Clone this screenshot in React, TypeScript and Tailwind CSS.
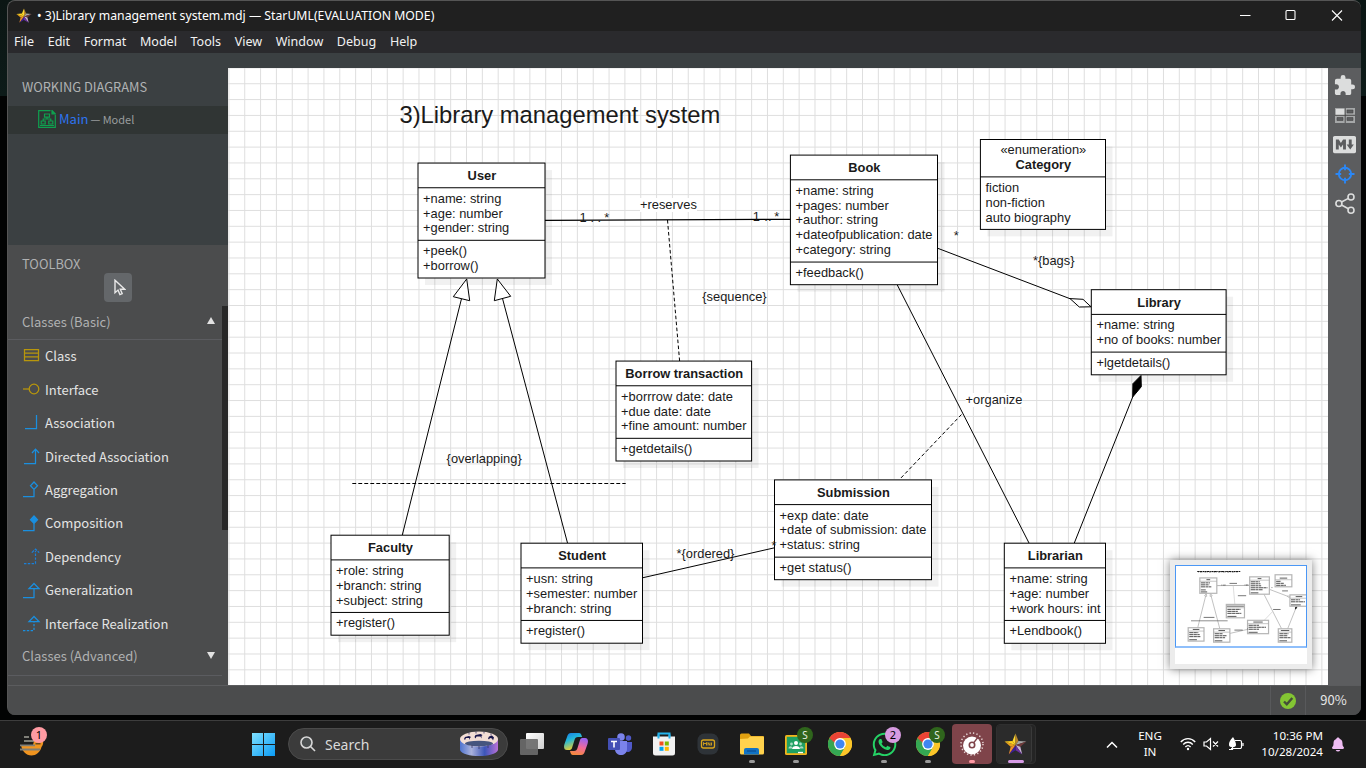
import React from "react";
import { FaWhatsapp } from "react-icons/fa";
import { MdExtension } from "react-icons/md";
import { IoLogoMarkdown, IoNotifications } from "react-icons/io5";

type UmlClass = {
  name: string;
  stereotype?: string;
  x: number;
  y: number;
  right: number;
  bottom: number;
  attrs: string[];
  ops: string[];
};

const classes: UmlClass[] = [
  { name: "User", x: 418, y: 163.06, right: 545, bottom: 278, attrs: ["+name: string", "+age: number", "+gender: string"], ops: ["+peek()", "+borrow()"] },
  { name: "Book", x: 790.4, y: 155.1, right: 937.5, bottom: 284.7, attrs: ["+name: string", "+pages: number", "+author: string", "+dateofpublication: date", "+category: string"], ops: ["+feedback()"] },
  { name: "Category", stereotype: "«enumeration»", x: 980.4, y: 139.5, right: 1105.5, bottom: 229.4, attrs: ["fiction", "non-fiction", "auto biography"], ops: [] },
  { name: "Library", x: 1091.3, y: 289.7, right: 1226.1, bottom: 374.8, attrs: ["+name: string", "+no of books: number"], ops: ["+lgetdetails()"] },
  { name: "Borrow transaction", x: 616, y: 361.07, right: 751.6, bottom: 461, attrs: ["+borrrow date: date", "+due date: date", "+fine amount: number"], ops: ["+getdetails()"] },
  { name: "Submission", x: 774.5, y: 479.9, right: 931.5, bottom: 579.7, attrs: ["+exp date: date", "+date of submission: date", "+status: string"], ops: ["+get status()"] },
  { name: "Faculty", x: 331, y: 535.2, right: 449.2, bottom: 635.2, attrs: ["+role: string", "+branch: string", "+subject: string"], ops: ["+register()"] },
  { name: "Student", x: 521, y: 543.2, right: 642.5, bottom: 643.2, attrs: ["+usn: string", "+semester: number", "+branch: string"], ops: ["+register()"] },
  { name: "Librarian", x: 1004.3, y: 543.2, right: 1105.5, bottom: 643.3, attrs: ["+name: string", "+age: number", "+work hours: int"], ops: ["+Lendbook()"] },
];

const labels: { text: string; x: number; y: number; backed?: boolean }[] = [
  { text: "+reserves", x: 640, y: 209, backed: true },
  { text: "1", x: 579.4, y: 221.5 },
  { text: ".", x: 590.5, y: 222 },
  { text: ".", x: 597.5, y: 222 },
  { text: "*", x: 604.3, y: 221.5 },
  { text: "1", x: 752.8, y: 220.5 },
  { text: ".", x: 764.3, y: 221 },
  { text: ".", x: 768, y: 221 },
  { text: "*", x: 774.2, y: 220.5 },
  { text: "{sequence}", x: 702.3, y: 301 },
  { text: "*", x: 953.8, y: 240 },
  { text: "*{bags}", x: 1033, y: 265 },
  { text: "+organize", x: 965.6, y: 404, backed: true },
  { text: "{overlapping}", x: 446.6, y: 463 },
  { text: "*{ordered}", x: 676.5, y: 558 },
  { text: "*", x: 771.5, y: 549.5 },
];

const ROW = 14.85;

function Edges({ mini = false }: { mini?: boolean }) {
  const stroke = mini ? "#a3a3a3" : "#000";
  const w = mini ? 5 : 1;
  return (
    <g stroke={stroke} strokeWidth={w} fill="none">
      <path d="M545 220.4L790.4 219.3" strokeWidth={mini ? 6 : 1.3} />
      <path d="M667.5 220L679.6 361" strokeDasharray={mini ? undefined : "3.6 2.4"} stroke={mini ? "#ccc" : stroke} />
      <path d="M461.5 298.7L402.3 535" />
      <path d="M466.7 279L453.3 296.7L469.7 300.7Z" fill="#fff" />
      <path d="M502.5 298.5L567.5 543" />
      <path d="M497.3 279L494.3 300.7L510.7 296.3Z" fill="#fff" />
      <path d="M352.3 483.5H625.7" strokeDasharray={mini ? undefined : "3.9 2.1"} stroke={mini ? "#555" : stroke} />
      <path d="M642.5 577.8L774.5 547.8" />
      <path d="M897.3 285L1029 543" />
      <path d="M961.5 414.5L899.5 479.5" strokeDasharray={mini ? undefined : "3.6 2.4"} stroke={mini ? "#ccc" : stroke} />
      <path d="M937.5 248.2L1070 298.7" />
      <path d="M1070 298.6L1083 299.3L1091 306.8L1079.3 307Z" fill="#fff" />
      <path d="M1132.7 397L1074.3 543" />
      <path d="M1141 375.5L1141.3 386.7L1132.7 397L1132.9 383.7Z" fill="#000" stroke="#000" />
    </g>
  );
}

function UmlNode({ c }: { c: UmlClass }) {
  const w = c.right - c.x;
  const head = c.stereotype ? 37.4 : 24.7;
  const d1 = c.y + head;
  const d2 = d1 + c.attrs.length * ROW + 8;
  const mid = c.x + w / 2 + 0.4;
  return (
    <g>
      <rect x={c.x + 7} y={c.y + 7} width={w} height={c.bottom - c.y} fill="#000" fillOpacity={0.055} />
      <rect x={c.x} y={c.y} width={w} height={c.bottom - c.y} fill="#fff" stroke="#000" />
      <path d={`M${c.x} ${d1}H${c.right}`} stroke="#000" />
      {c.ops.length > 0 && <path d={`M${c.x} ${d2}H${c.right}`} stroke="#000" />}
      {c.stereotype && (
        <text x={mid} y={Math.round(c.y + 14.4)} textAnchor="middle">{c.stereotype}</text>
      )}
      <text x={mid} y={Math.round(d1 - 7.6)} textAnchor="middle" fontWeight="bold">{c.name}</text>
      {c.attrs.map((t, i) => (
        <text key={t} x={c.x + 5.1} y={Math.round(d1 + 14.95 + i * ROW)}>{t}</text>
      ))}
      {c.ops.map((t, i) => (
        <text key={t} x={c.x + 5.1} y={Math.round(d2 + 15 + i * ROW)}>{t}</text>
      ))}
    </g>
  );
}

function Diagram() {
  return (
    <svg className="block h-[617px] w-[1100px] shrink-0 [font-family:'Liberation_Sans',Arial,sans-serif]" viewBox="228 68 1100 617" fontSize={12.87} fill="#1a1a1a">
      <defs>
        <pattern id="grid" x="228.4" y="67.4" width="15.84" height="15.84" patternUnits="userSpaceOnUse">
          <path d="M0.5 0V15.84M0 0.5H15.84" stroke="#dedede" fill="none" />
        </pattern>
      </defs>
      <rect x="228" y="68" width="1100" height="617" fill="#fff" />
      <rect x="228" y="68" width="1100" height="617" fill="url(#grid)" />
      <text x="399.5" y="123" fontSize={23.76}>3)Library management system</text>
      {classes.map((c) => <UmlNode key={c.name} c={c} />)}
      {labels.filter((l) => l.backed).map((l) => (
        <rect key={l.text} x={l.x} y={l.y - 11} width={57} height={14} fill="#fff" />
      ))}
      <Edges />
      {labels.map((l, i) => <text key={i} x={l.x} y={l.y}>{l.text}</text>)}
    </svg>
  );
}

function Minimap() {
  return (
    <div className="absolute right-4 bottom-4 h-[109px] w-[142px] bg-[#ececec] p-[5px] shadow-[0_0_9px_rgba(0,0,0,0.5)]">
      <div className="h-[99px] bg-white">
        <div className="h-[82.5px] border border-b-2 border-[#4b97f5] border-b-[#8fbffb]">
          <svg className="block h-full w-full" viewBox="240 74 975 594" preserveAspectRatio="xMinYMin slice">
            <Edges mini />
            <path d="M399 115H720" stroke="#111" strokeWidth={8} strokeDasharray="13 3 22 4 9 3" />
            <path d="M405 121H700" stroke="#777" strokeWidth={5} strokeDasharray="5 9 14 6" />
            {classes.map((c) => {
              const d1 = c.y + (c.stereotype ? 37 : 25);
              return (
                <g key={c.name} stroke="#8c8c8c" strokeWidth={6}>
                  <rect x={c.x} y={c.y} width={c.right - c.x} height={c.bottom - c.y} fill="#fff" stroke="#b5b5b5" strokeWidth={9} />
                  <path d={`M${c.x} ${d1}H${c.right}`} strokeWidth={5} stroke="#aaa" />
                  <path d={`M${(c.x + c.right) / 2 - c.name.length * 3.5} ${d1 - 12}h${c.name.length * 7}`} stroke="#333" />
                  {c.attrs.map((t, i) => (
                    <path key={t} d={`M${c.x + 8} ${d1 + 12 + i * ROW}h${t.length * 5.2}`} stroke="#222" strokeDasharray="32 3 22 3" />
                  ))}
                  {c.ops.map((t, i) => (
                    <path key={t} d={`M${c.x + 8} ${d1 + 20 + (c.attrs.length + i) * ROW}h${t.length * 5.2}`} stroke="#333" />
                  ))}
                </g>
              );
            })}
            {labels.map((l, i) => (
              <path key={i} d={`M${l.x} ${l.y - 5}h${l.text.length * 6.2}`} stroke="#333" strokeWidth={5} />
            ))}
          </svg>
        </div>
      </div>
    </div>
  );
}

function Star({ className }: { className: string }) {
  const colors = [
    ["#ffd92e", "#b8862c"],
    ["#a9a9a9", "#6f3a3a"],
    ["#c9b3d6", "#6a2fa0"],
    ["#3b1f96", "#f0902a"],
    ["#e8a01c", "#ffd21f"],
  ];
  const pt = (r: number, deg: number) => {
    const a = ((deg - 90) * Math.PI) / 180;
    return `${(r * Math.cos(a)).toFixed(2)},${(r * Math.sin(a)).toFixed(2)}`;
  };
  return (
    <svg viewBox="-10 -10 20 19" className={className}>
      {colors.map(([l, r], i) => (
        <g key={i}>
          <polygon points={`0,0 ${pt(10, i * 72)} ${pt(4.4, i * 72 - 36)}`} fill={l} />
          <polygon points={`0,0 ${pt(10, i * 72)} ${pt(4.4, i * 72 + 36)}`} fill={r} />
        </g>
      ))}
    </svg>
  );
}

const tools: { name: string; color: string; icon: React.ReactNode }[] = [
  { name: "Class", color: "#b8960c", icon: <path d="M1.5 2.5h14v11h-14zM1.5 6.2h14M1.5 9.8h14" /> },
  { name: "Interface", color: "#b8960c", icon: <><path d="M0 8h6" /><circle cx="11" cy="8" r="4.8" /></> },
  { name: "Association", color: "#1a8fe0", icon: <path d="M2 14.5h11.5V1" /> },
  { name: "Directed Association", color: "#1a8fe0", icon: <path d="M1 15.5h11.5V1.5M9 5l3.5-3.8L16 5" /> },
  { name: "Aggregation", color: "#1a8fe0", icon: <path d="M0 15.5h11V8.5M11 1l3.5 3.7L11 8.4 7.5 4.7z" /> },
  { name: "Composition", color: "#1a8fe0", icon: <><path d="M0 15.5h11V8.5" /><path d="M11 1l3.5 3.7L11 8.4 7.5 4.7z" fill="#1a8fe0" /></> },
  { name: "Dependency", color: "#1a7fd8", icon: <><path d="M1 15.5h11.5V3" strokeDasharray="2.4 1.4" /><path d="M8.8 4.6l3.7-3.4 3.7 3.4" strokeDasharray="3 1" /></> },
  { name: "Generalization", color: "#1a8fe0", icon: <path d="M0 15.5h11V6.5M11 1.5l5 5H6z" /> },
  { name: "Interface Realization", color: "#1a8fe0", icon: <><path d="M0 15.5h11V6.5" strokeDasharray="2.4 1.4" /><path d="M11 1.5l5 5H6z" /></> },
];

function Sidebar() {
  return (
    <aside className="flex w-[220px] shrink-0 flex-col text-[13px] [font-family:'Noto_Sans_CJK_SC',sans-serif]">
      <div className="flex h-[177px] flex-col bg-[#3b4042]">
        <div className="h-[38px] pt-[9px] pl-[14px] text-[12.85px] leading-5 text-[#b0b3b4]">WORKING DIAGRAMS</div>
        <div className="flex h-7 items-center bg-[#303534] pb-[2px] pl-[30px]">
          <svg viewBox="0 0 18 18" className="h-[18px] w-[18px]" fill="none" stroke="#0fa04f" strokeWidth="1.2">
            <path d="M12.5 .7H.7v16.6h16.6V5" />
            <path d="M14 .5v3.3h3.3z" fill="#0fa04f" />
            <path d="M6.5 4h5v3.2h-5zM3.2 11h4v3h-4zM10.8 11h4v3h-4zM9 7v2M5.2 11V9h7.6v2M2 15.5h14" />
          </svg>
          <span className="ml-[3px] text-[13px] text-[#2d74f0]">Main</span>
          <span className="ml-[2px] text-[11px] text-[#9a9d9e]">— Model</span>
        </div>
      </div>
      <div className="flex min-h-0 flex-1 flex-col bg-[#4b4c4d]">
        <div className="h-7 pt-[9px] pl-[14px] text-[12.85px] leading-5 text-[#b0b1b2]">TOOLBOX</div>
        <div className="flex justify-center">
          <div className="flex h-[29px] w-7 items-center justify-center rounded bg-[#64676a]">
            <svg viewBox="0 0 12 17" className="ml-[3px] h-[17px] w-3" fill="none" stroke="#e8e8e8" strokeWidth="1.4">
              <path d="M1 1.2v12.6l3-2.7 1.9 4.5 2.3-1-1.9-4.4h4.4z" />
            </svg>
          </div>
        </div>
        <div className="flex min-h-0 flex-1">
          <div className="mt-[4px] flex-1">
            <div className="flex h-[34px] items-center justify-between border-b border-[#5b5c60] pr-[7px] pb-[2px] pl-[14px] text-[#b0b1b2]">
              <span>Classes (Basic)</span>
              <svg viewBox="0 0 8 7" className="mb-[2px] h-[7px] w-2"><path d="M4 0l4 7H0z" fill="#e2e2e2" /></svg>
            </div>
            {tools.map((t) => (
              <div key={t.name} className="flex h-[33.46px] items-center pb-[1.5px] pl-[15px] text-[#e4e4e4]">
                <svg viewBox="0 0 17 17" className="h-[17px] w-[17px] overflow-visible" fill="none" stroke={t.color} strokeWidth="1.25">{t.icon}</svg>
                <span className="ml-[5px]">{t.name}</span>
              </div>
            ))}
            <div className="flex h-[35px] items-center justify-between border-b border-[#5b5c60] pr-[7px] pb-[4px] pl-[14px] text-[#b0b1b2]">
              <span>Classes (Advanced)</span>
              <svg viewBox="0 0 8 7" className="mb-[2px] h-[7px] w-2"><path d="M4 7l4-7H0z" fill="#e2e2e2" /></svg>
            </div>
          </div>
          <div className="mt-[4px] h-[224px] w-[6px] bg-[#272727]" />
        </div>
      </div>
    </aside>
  );
}

function RightBar() {
  return (
    <aside className="flex w-[33px] shrink-0 flex-col items-center bg-[#5c5d5f] pt-[3px]">
      <div className="flex h-[29.5px] items-center"><MdExtension className="h-[23px] w-[23px] text-[#dcdddd]" /></div>
      <div className="flex h-[29.5px] items-center">
        <svg viewBox="0 0 20 15" className="h-[15px] w-5">
          <path d="M0 0h20v15H0z" fill="#a5a7a8" />
          <path d="M1 1h8.5v6H1z" fill="#dcdddd" />
          <path d="M12 2h6v3h-6zM2 9.5h6v3H2zM12 9.5h6v3h-6z" fill="#5c5d5f" stroke="#444" strokeWidth=".6" />
          <path d="M0 7.3h20M10.2 0v15" stroke="#444" strokeWidth=".9" />
        </svg>
      </div>
      <div className="flex h-[29.5px] items-center">
        <IoLogoMarkdown className="h-[23px] w-[23px] text-[#dcdddd]" />
      </div>
      <div className="flex h-[29.5px] items-center">
        <svg viewBox="0 0 20 20" className="h-5 w-5" fill="none" stroke="#2b87f5" strokeWidth="1.9">
          <circle cx="10" cy="10" r="6.2" />
          <path d="M10 .5v5.7M10 13.8v5.7M.5 10h5.7M13.8 10h5.7" />
        </svg>
      </div>
      <div className="flex h-[28px] items-center">
        <svg viewBox="0 0 20 21" className="h-[21px] w-5" fill="none" stroke="#dcdddd" strokeWidth="1.6">
          <circle cx="3.9" cy="10.5" r="3" /><circle cx="16" cy="4" r="3" /><circle cx="16" cy="17.2" r="3" />
          <path d="M6.5 9l6.9-3.6M6.5 12l6.9 3.8" />
        </svg>
      </div>
    </aside>
  );
}

function Chrome() {
  return (
    <svg viewBox="0 0 24 24" className="h-6 w-6">
      <circle cx="12" cy="12" r="12" fill="#fcc629" />
      <path d="M1.6 6A12 12 0 0 0 12 24L17.2 15z" fill="#34a853" />
      <path d="M1.6 6L7 15 12 12z" fill="#34a853" />
      <path d="M22.4 6H12v6l5.2 3L12 24A12 12 0 0 0 22.4 6z" fill="#fcc629" />
      <path d="M1.6 6A12 12 0 0 1 22.4 6H12L7 9z" fill="#ea4335" />
      <path d="M1.6 6L7 15V9L12 6z" fill="#ea4335" />
      <path d="M1.6 6L6.8 15l1-3z" fill="#34a853" />
      <circle cx="12" cy="12" r="5.9" fill="#fff" />
      <circle cx="12" cy="12" r="4.6" fill="#3f86f2" />
    </svg>
  );
}

function Cell({ children, badge, mark }: { children: React.ReactNode; badge?: React.ReactNode; mark?: string }) {
  return (
    <div className="relative flex h-full w-[44px] shrink-0 items-center justify-center pb-px">
      {children}
      {badge}
      {mark && <div className={mark} />}
    </div>
  );
}

const RUNNING = "absolute bottom-[5px] left-[19px] h-[3px] w-[6px] rounded-full bg-[#9a9a9a]";
const sBadge = (
  <div className="absolute top-[6px] right-[5px] flex h-4 w-4 items-center justify-center rounded-full bg-[#2f651c] text-[10px] text-[#e6efe2]">S</div>
);

function Taskbar() {
  return (
    <footer className="flex h-12 items-center border-t border-[#3d3d3d] bg-[#1c1c1c] text-white [font-family:'Noto_Sans',sans-serif]">
      <div className="relative ml-5 h-[31px] w-[30px]">
        <svg viewBox="0 0 24 20" className="absolute top-[7px] left-0 h-5 w-6">
          <path d="M1 9h12l1-4h9c.5 2 0 4-1.500 6C20 16.500 16 19.500 11.500 19.500 6 19.500 2 15 1 9z" fill="#f0941f" />
          <path d="M15.500 7h5v1.500h-5z" fill="#6b4a18" />
          <path d="M4 1h5M4 5h10M0 9.300h15M0 13.500h20" stroke="#7f7f78" strokeWidth="1.800" />
        </svg>
        <div className="absolute top-[-2px] left-[11px] flex h-4 w-4 items-center justify-center rounded-full bg-[#ff9aa2] text-[11px] text-black">1</div>
      </div>
      <svg viewBox="0 0 23 23" className="ml-[202px] h-[23px] w-[23px]">
        <defs>
          <linearGradient id="win" x1="0" y1="0" x2="1" y2="1"><stop offset="0" stopColor="#7fe0ff" /><stop offset="1" stopColor="#0a9bf5" /></linearGradient>
        </defs>
        <path d="M0 0h11v11H0zM12 0h11v11H12zM0 12h11v11H0zM12 12h11v11H12z" fill="url(#win)" />
      </svg>
      <div className="mb-px ml-[13px] flex h-8 w-[220px] items-center rounded-full border border-[#4b4b4b] bg-[#3b3b3b] pr-[9px] pl-[11px]">
        <svg viewBox="0 0 16 16" className="h-4 w-4" fill="none" stroke="#d8d8d8" strokeWidth="1.6">
          <circle cx="6.500" cy="6.500" r="5.500" fill="#4b4f50" /><path d="M10.500 10.500l4.500 4.500" />
        </svg>
        <span className="ml-[9px] flex-1 text-[14px] text-[#dadada]">Search</span>
        <svg viewBox="0 0 38 26" className="h-[26px] w-[38px]">
          <defs>
            <linearGradient id="ring" x1="0" x2="1"><stop offset="0" stopColor="#4f74d0" /><stop offset=".3" stopColor="#aab2dc" /><stop offset=".65" stopColor="#3c55b8" /><stop offset="1" stopColor="#b870d8" /></linearGradient>
          </defs>
          <path d="M0 8v11c3 8 35 8 38 0V8z" fill="url(#ring)" />
          <ellipse cx="19" cy="8" rx="19" ry="7.500" fill="#f2ddd4" />
          <ellipse cx="19" cy="12.500" rx="14" ry="2.800" fill="#46557e" />
          <path d="M4 8l1-2 4-1 2 1-1 1v2l-1-2-3 0-1 2zM14.500 6l1-2 5-1 2 1-1 1v2.500l-1-2-4 0-1 2zM28 7.500l1-2 3-1 2 2-1 3-1-2-2-.500-1 1.500z" fill="#17154a" />
          <path d="M9 1.500v2M16 .500v2M24 .500v2M31 2.500v2M12 14v3M19 15v3M28 14v3" stroke="#373766" strokeWidth=".8" />
        </svg>
      </div>
      <div className="ml-[2px] flex h-full">
        <Cell>
          <svg viewBox="0 0 24 22" className="h-[22px] w-6">
            <defs><linearGradient id="tv" x1="0" y1="0" x2="1" y2="1"><stop offset="0" stopColor="#fff" /><stop offset="1" stopColor="#cfcfcf" /></linearGradient></defs>
            <rect x="6" y="0" width="18" height="16" rx="1" fill="url(#tv)" />
            <rect x="0" y="6" width="18" height="16" rx="1" fill="#6b6b6b" fillOpacity=".92" />
          </svg>
        </Cell>
        <Cell>
          <svg viewBox="0 0 24 22" className="h-[22px] w-6">
            <defs>
              <linearGradient id="cpa" x1="0" y1="0" x2=".4" y2="1"><stop offset="0" stopColor="#1778e8" /><stop offset=".45" stopColor="#22b8d8" /><stop offset="1" stopColor="#f3d02a" /></linearGradient>
              <linearGradient id="cpb" x1=".6" y1="0" x2=".3" y2="1"><stop offset="0" stopColor="#9a64f0" /><stop offset=".5" stopColor="#f06a9a" /><stop offset="1" stopColor="#f58a3a" /></linearGradient>
            </defs>
            <path d="M7 0h8c2 0 2.500 2 3 4h-4c-2 0-3 1-3.500 3L8 15c-.500 1.500-1.500 2-3 2H3c-3 0-3.500-3-2.500-6L3 4c.800-2.500 1.800-4 4-4z" fill="url(#cpa)" />
            <path d="M17 22H9c-2 0-2.500-2-3-4h4c2 0 3-1 3.500-3L16 7c.500-1.500 1.500-2 3-2h2c3 0 3.500 3 2.500 6L21 18c-.800 2.500-1.800 4-4 4z" fill="url(#cpb)" />
          </svg>
        </Cell>
        <Cell>
          <svg viewBox="0 0 24 22" className="h-[22px] w-6">
            <circle cx="13" cy="4" r="3.800" fill="#7b83eb" /><circle cx="20.500" cy="5" r="2.700" fill="#5059c9" />
            <path d="M16 9h8v5c0 6-6 6-8 3z" fill="#5059c9" /><path d="M7 8h12v8c0 8-12 8-12 0z" fill="#7b83eb" />
            <rect x="0" y="5" width="12" height="12" rx="1" fill="#4450b5" />
            <path d="M3 8.500h6M6 8.500v6" stroke="#fff" strokeWidth="1.600" />
          </svg>
        </Cell>
        <Cell>
          <svg viewBox="0 0 24 24" className="h-6 w-6">
            <path d="M6.500 7V1.500h11V7" fill="none" stroke="#24b3ec" strokeWidth="2" />
            <path d="M1 4.500h22V21a2.500 2.500 0 0 1-2.500 2.500h-17A2.500 2.500 0 0 1 1 21z" fill="#f1f1f1" />
            <path d="M6.500 6.500V2.500M17.500 6.500V2.500" stroke="#24b3ec" strokeWidth="2" />
            <path d="M7.500 9.500h4v4h-4z" fill="#f25022" /><path d="M12.800 9.500h4v4h-4z" fill="#7fba00" />
            <path d="M7.500 14.800h4v4h-4z" fill="#00a4ef" /><path d="M12.800 14.800h4v4h-4z" fill="#ffb900" />
          </svg>
        </Cell>
        <Cell>
          <svg viewBox="0 0 22 22" className="h-[22px] w-[22px]">
            <rect x=".500" y=".500" width="21" height="21" rx="7" fill="#2e3338" />
            <rect x="4.500" y="7" width="13" height="8" rx="2" fill="none" stroke="#d9a51c" strokeWidth="1.300" />
            <path d="M6.500 12.500v-3l1.500 1.500 1.500-1.500v3M11 12.500v-3l2 3v-3M14.500 9.500v3" stroke="#d9a51c" fill="none" strokeWidth=".9" />
          </svg>
        </Cell>
        <Cell mark={RUNNING}>
          <svg viewBox="0 0 24 22" className="h-[22px] w-6">
            <path d="M0 2a1.500 1.500 0 0 1 1.500-1.500H9L11 3h12a1 1 0 0 1 1 1v8H0z" fill="#e0a010" />
            <path d="M0 6l8-.500 2-2h13a1 1 0 0 1 1 1V20a1.500 1.500 0 0 1-1.500 1.500h-21A1.500 1.500 0 0 1 0 20z" fill="#ffd24d" />
            <path d="M4 21.500V17a2 2 0 0 1 2-2h11a2 2 0 0 1 2 2v4.500z" fill="#1173c5" /><path d="M7 18h9" stroke="#0b4f93" strokeWidth="1.300" />
          </svg>
        </Cell>
        <Cell mark={RUNNING} badge={sBadge}>
          <svg viewBox="0 0 22 20" className="mt-[2px] h-5 w-[22px]">
            <rect x="0" y="0" width="22" height="20" rx="1.500" fill="#f2b51c" /><rect x="1.800" y="1.800" width="18.400" height="16.400" fill="#1fa163" />
            <circle cx="11" cy="8" r="2" fill="#fff" /><circle cx="6.500" cy="9" r="1.400" fill="#a6dbbf" /><circle cx="15.500" cy="9" r="1.400" fill="#a6dbbf" />
            <path d="M7 14c0-4 8-4 8 0z" fill="#fff" /><path d="M3.500 13.500c0-3 4-3 4 0zM14.500 13.500c0-3 4-3 4 0z" fill="#a6dbbf" /><path d="M13 17.500h5" stroke="#fff" strokeWidth="1.300" />
          </svg>
        </Cell>
        <Cell><Chrome /></Cell>
        <Cell mark={RUNNING} badge={<div className="absolute top-[6px] right-[5px] flex h-4 w-4 items-center justify-center rounded-full bg-[#d79be0] text-[11px] text-black">2</div>}>
          <FaWhatsapp className="h-[27px] w-[27px] text-[#25d366]" />
        </Cell>
        <Cell mark={RUNNING} badge={sBadge}><Chrome /></Cell>
        <Cell mark="absolute bottom-[5px] left-[19px] h-[3px] w-[6px] rounded-full bg-[#ff99a4]">
          <div className="flex h-10 w-10 items-center justify-center rounded bg-[#7f444a]">
            <svg viewBox="0 0 26 24" className="h-6 w-[26px]">
              <circle cx="13" cy="12" r="11" fill="none" stroke="#e8d8d8" strokeWidth="1.500" strokeDasharray="1.300 2.200" />
              <circle cx="13" cy="13.500" r="9" fill="#fff" /><circle cx="13" cy="13" r="3.500" fill="#7f444a" />
              <path d="M13 13l6.500-8.500" stroke="#7f444a" strokeWidth="1.300" /><circle cx="13" cy="13" r="1.900" fill="#fff" />
            </svg>
          </div>
        </Cell>
        <Cell mark="absolute bottom-[5px] left-[14px] h-[3px] w-4 rounded-full bg-[#d79be6]">
          <div className="flex h-10 w-10 rounded border border-[#2f2f2f] bg-[#242424]">
            <div className="flex w-[35px] items-center justify-center rounded border-r border-[#3a3a3a] bg-[#2b2b2b] pl-[3px]"><Star className="h-[23px] w-[23px]" /></div>
          </div>
        </Cell>
      </div>
      <svg viewBox="0 0 12 8" className="ml-[68px] h-2 w-3" fill="none" stroke="#fff" strokeWidth="1.500"><path d="M1 6.500L6 1.500l5 5" /></svg>
      <div className="mb-px ml-[20px] w-6 text-center text-[11.6px] leading-4">ENG<br />IN</div>
      <svg viewBox="0 0 64 16" className="mb-px ml-[18px] h-4 w-16" fill="none" stroke="#fff" strokeWidth="1.200">
        <path d="M.8 6c4-4.500 10.400-4.500 14.400 0M3.200 8.500c2.800-3 6.800-3 9.600 0M5.400 11c1.700-1.800 3.500-1.800 5.200 0" strokeWidth="1.400" />
        <circle cx="8" cy="13" r="1.200" fill="#fff" stroke="none" />
        <path d="M24 6h2.500L30.500 2.500v11L26.500 10H24zM33 5.500l5 5M38 5.500l-5 5" />
        <path d="M55 4.500h5a1.500 1.500 0 0 1 1.500 1.500v5a1.500 1.500 0 0 1-1.500 1.500H51M63 7v3" />
        <path d="M49 9c0-4 2.500-6 4-8 2 3 3 6 3 8 0 3-7 3-7 0z" fill="#fff" stroke="none" /><path d="M52.500 5v9M49 13.500h3" />
      </svg>
      <div className="mb-[2px] ml-[7px] w-[72px] text-right text-[11.6px] leading-4">10:36 PM<br />10/28/2024</div>
      <IoNotifications className="ml-[7px] h-[17px] w-4 text-[#eebcf2]" />
    </footer>
  );
}

const menus = ["File", "Edit", "Format", "Model", "Tools", "View", "Window", "Debug", "Help"];

export default function App() {
  return (
    <div className="flex h-[768px] w-[1366px] flex-col overflow-hidden bg-[linear-gradient(#0b1614_0px,#0d1b19_96px,#020303_96px,#020303_100%)]">
      <div className="h-[720px] px-[5px] pl-[7px]">
        <main className="flex h-[715px] w-[1354px] flex-col overflow-hidden rounded-lg border-t border-l border-[#555] bg-[#4b4c4d]">
          <header className="flex h-[30px] shrink-0 items-center bg-[#202020] pl-2 text-white [font-family:'Noto_Sans',sans-serif]">
            <Star className="mb-px h-4 w-4" />
            <span className="ml-[5px] flex-1 text-[12.25px] whitespace-nowrap">• 3)Library management system.mdj — StarUML(EVALUATION MODE)</span>
            <svg viewBox="0 0 104 12" className="mr-[18px] mb-[2px] h-3 w-[104px]" fill="none" stroke="#fff" strokeWidth="1.100">
              <path d="M1 6.500h10.500M93 1.500l10 10M103 1.500l-10 10" /><rect x="47" y="1.500" width="9" height="9" rx="1" />
            </svg>
          </header>
          <nav className="flex h-[22px] shrink-0 items-center bg-[#2a2a2d] pl-[6px] text-[12.55px] text-[#f1f1f1] [font-family:'Noto_Sans',sans-serif]">
            {menus.map((m) => <span key={m} className="mr-[13.6px]">{m}</span>)}
          </nav>
          <div className="h-[15px] shrink-0 bg-[#3b4042]" />
          <div className="flex h-[617px] shrink-0">
            <Sidebar />
            <div className="relative w-[1100px] shrink-0 overflow-hidden">
              <Diagram />
              <Minimap />
            </div>
            <RightBar />
          </div>
          <div className="flex flex-1 items-stretch justify-end border-t border-[#5b5c5e] bg-[#4b4c4d]">
            <div className="flex w-[36px] items-center justify-center border-x border-[#58595b]">
              <svg viewBox="0 0 16 16" className="h-4 w-4"><circle cx="8" cy="8" r="8" fill="#83c533" /><path d="M4 8.500l2.800 2.800L12.300 5" fill="none" stroke="#444d38" strokeWidth="2.400" /></svg>
            </div>
            <div className="flex w-[55px] items-center justify-center pb-px text-[13px] text-[#e6e6e6] [font-family:'Noto_Sans_CJK_SC',sans-serif]">90%</div>
          </div>
        </main>
      </div>
      <Taskbar />
    </div>
  );
}
